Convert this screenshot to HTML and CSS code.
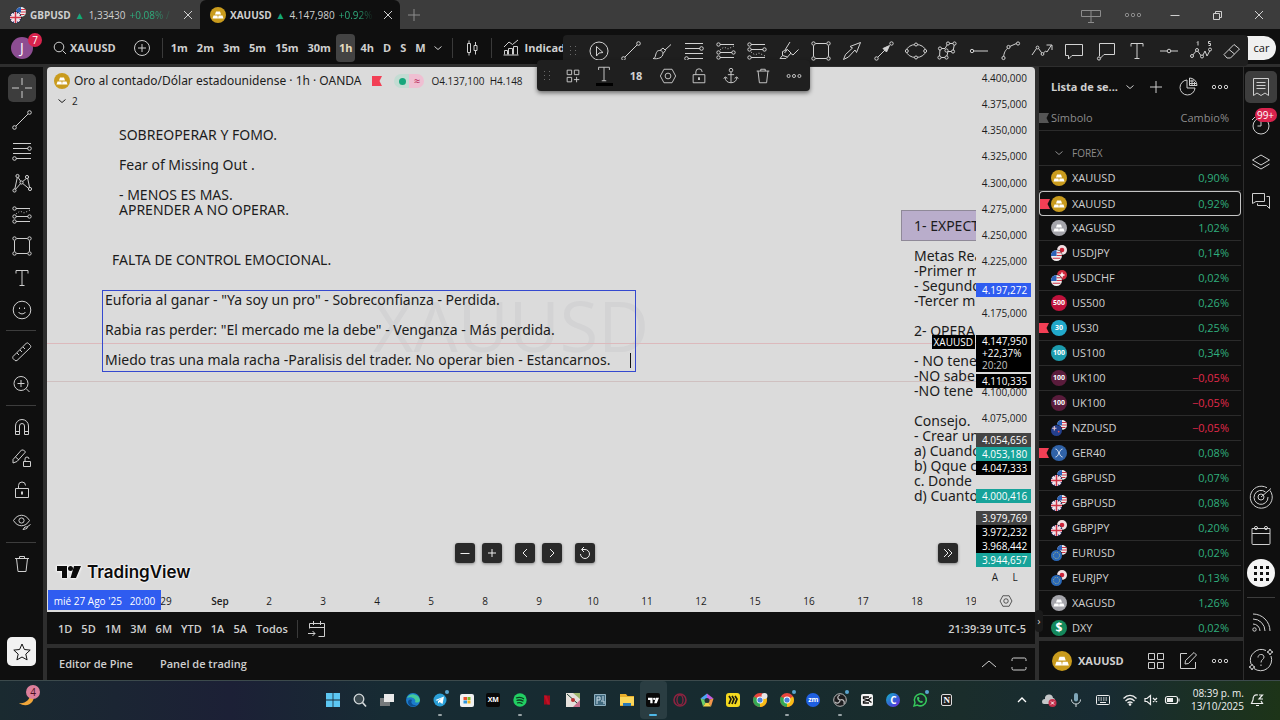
FILE: index.html
```html
<!DOCTYPE html>
<html lang="es">
<head>
    <meta charset="UTF-8">
    <meta name="viewport" content="width=device-width, initial-scale=1.0">
    <title>XAUUSD 4.147,980 +0.92%</title>
    <link rel="stylesheet" href="styles.css">
</head>
<body>
    <!-- icon sprite -->
    <svg class="sprite" aria-hidden="true">
        <symbol id="i-close" viewBox="0 0 20 20"><path d="M6 6l8 8M14 6l-8 8"/></symbol>
        <symbol id="i-plus" viewBox="0 0 20 20"><path d="M10 4v12M4 10h12"/></symbol>
        <symbol id="i-plus-circle" viewBox="0 0 20 20"><circle cx="10" cy="10" r="7.500"/><path d="M10 6v8M6 10h8"/></symbol>
        <symbol id="i-min" viewBox="0 0 20 20"><path d="M5.500 10.500h9"/></symbol>
        <symbol id="i-restore" viewBox="0 0 20 20"><path d="M6.500 8.500h6v6h-6zM8.500 8.500v-2h6v6h-2"/></symbol>
        <symbol id="i-layout" viewBox="0 0 20 20"><path d="M.5 5.500h19v6h-19zM10 5.500v12M7 17.500h6"/></symbol>
        <symbol id="i-dots" viewBox="0 0 20 20"><circle cx="4" cy="10" r="1.700"/><circle cx="10" cy="10" r="1.700"/><circle cx="16" cy="10" r="1.700"/></symbol>
        <symbol id="i-search" viewBox="0 0 20 20"><circle cx="9" cy="9" r="4.800"/><path d="M12.500 12.500l3.500 3.500"/></symbol>
        <symbol id="i-chevron" viewBox="0 0 20 20"><path d="M6.500 8.500l3.500 3 3.500-3"/></symbol>
        <symbol id="i-up" viewBox="0 0 20 20"><path d="M3 13l7-6 7 6"/></symbol>
        <symbol id="i-candles" viewBox="0 0 20 20"><path d="M5.500 5.500h3v9h-3zM7 2.500v3M7 14.500v3M12 7.500h3v5h-3zM13.500 4v3.500M13.500 12.500v4"/></symbol>
        <symbol id="i-indicators" viewBox="0 0 20 20"><path d="M3.500 16.500v-4h3v4M7.500 16.500v-6h4v6M12.500 16.500v-8h4v8M2.500 17h15M3 9l5-5 3.500 2.500L17 2"/></symbol>
        <symbol id="i-grip" viewBox="0 0 20 20"><g stroke="none" fill="currentColor"><path d="M7 5h1v1H7zM12 5h1v1h-1zM7 9h1v1H7zM12 9h1v1h-1zM7 13h1v1H7zM12 13h1v1h-1z"/></g></symbol>
        <symbol id="i-cursor" viewBox="0 0 20 20"><circle cx="10" cy="10" r="9"/><path d="M7.500 5.500l6.500 6-4 .5-2.500 3z"/></symbol>
        <symbol id="i-cross" viewBox="0 0 20 20"><path d="M10 0v7M10 13v7M0 10h7M13 10h7"/></symbol>
        <symbol id="i-trend" viewBox="0 0 20 20"><circle cx="2.500" cy="17.500" r="1.800"/><circle cx="17.500" cy="2.500" r="1.800"/><path d="M4 16L16 4"/></symbol>
        <symbol id="i-brush" viewBox="0 0 20 20"><path d="M1 17.500c3 0 2-4 4-7 2-2 6-1 6 2 0 4-5 6-10 5zM8 9.500l3-2.500 2.500 2.500-2.500 3M13 9l6-5.500"/></symbol>
        <symbol id="i-fib" viewBox="0 0 20 20"><path d="M1 2.500h18M1 7.500h15M1 12.500h18M4 17.500h15"/><circle cx="17.500" cy="7.500" r="1.800"/><circle cx="2.500" cy="17.500" r="1.800"/></symbol>
        <symbol id="i-long" viewBox="0 0 20 20"><path d="M4 3.500h14M4 11.500h12M4 16.500h14"/><circle cx="2.500" cy="3.500" r="1.700"/><circle cx="2.500" cy="11.500" r="1.700"/><circle cx="2.500" cy="16.500" r="1.700"/><circle cx="17.500" cy="11.500" r="1.700"/><path stroke-dasharray="1 2" d="M4 9l4-3 4 2 6-3"/></symbol>
        <symbol id="i-short" viewBox="0 0 20 20"><path d="M4 3.500h14M4 8.500h12M4 16.500h14"/><circle cx="2.500" cy="3.500" r="1.700"/><circle cx="2.500" cy="8.500" r="1.700"/><circle cx="2.500" cy="16.500" r="1.700"/><circle cx="17.500" cy="8.500" r="1.700"/><path stroke-dasharray="1 2" d="M4 11l4 3 4-2 6 3"/></symbol>
        <symbol id="i-marker" viewBox="0 0 20 20"><path d="M1 17.500h6l1.500-1.500M1 17.500l2.500-3M3.500 14.500v-4l5-2 3.500 3.500-3.500 4zM8.500 8.500l-3 3.500M6 9L11 1M12 12.500l2 1.500 5.500-5.500"/></symbol>
        <symbol id="i-rect" viewBox="0 0 20 20"><path d="M4.500 2.500h11M4.500 17.500h11M2.500 4.500v11M17.500 4.500v11"/><circle cx="2.500" cy="2.500" r="1.700"/><circle cx="17.500" cy="2.500" r="1.700"/><circle cx="2.500" cy="17.500" r="1.700"/><circle cx="17.500" cy="17.500" r="1.700"/></symbol>
        <symbol id="i-arrow" viewBox="0 0 20 20"><path d="M1.500 18.500l2-5 7-6.500L8 5.500l10.500-4-4 10-1.500-2.500-6.500 7z"/></symbol>
        <symbol id="i-arrow-line" viewBox="0 0 20 20"><circle cx="2.500" cy="17.500" r="1.700"/><circle cx="17.500" cy="2.500" r="1.700"/><path d="M4 16l8-8"/><path fill="currentColor" d="M15.500 4.500L9 7.500l3.500 3.500z"/></symbol>
        <symbol id="i-ellipse" viewBox="0 0 22 20"><ellipse cx="11" cy="10" rx="9.500" ry="6.500"/><g class="knot"><circle cx="1.800" cy="10" r="1.500"/><circle cx="20.200" cy="10" r="1.500"/><circle cx="11" cy="3.500" r="1.500"/><circle cx="11" cy="16.500" r="1.500"/></g></symbol>
        <symbol id="i-path" viewBox="0 0 20 20"><path d="M3 7.500h5L11 2.500h6.500l-1.500 8h-5l-1.500 6H2.500z"/><g class="knot"><circle cx="3" cy="7.500" r="1.600"/><circle cx="11" cy="2.500" r="1.600"/><circle cx="17.500" cy="2.500" r="1.600"/><circle cx="16" cy="10.500" r="1.600"/><circle cx="9.500" cy="9.500" r="1.600"/><circle cx="9.500" cy="16.500" r="1.600"/><circle cx="2.500" cy="16.500" r="1.600"/></g></symbol>
        <symbol id="i-ray" viewBox="0 0 20 20"><circle cx="3" cy="10" r="1.700"/><path d="M5 10h14"/></symbol>
        <symbol id="i-curve" viewBox="0 0 20 20"><path d="M2.500 16c1-7 3-7 5-10l9-4"/><g class="knot"><circle cx="2.500" cy="17" r="1.600"/><circle cx="7.500" cy="6" r="1.600"/><circle cx="17" cy="2.500" r="1.600"/></g></symbol>
        <symbol id="i-zigzag" viewBox="0 0 22 20"><path d="M1 14l5.500-8 5 7 3-3 1.500 1 4.500-7M15.500 4H21v5"/><g class="knot"><circle cx="6.500" cy="6.500" r="1.400"/><circle cx="11.500" cy="13" r="1.400"/></g></symbol>
        <symbol id="i-comment" viewBox="0 0 20 20"><path d="M1.500 3.500h17v11H8L4.500 18v-3.500h-3z"/></symbol>
        <symbol id="i-callout" viewBox="0 0 20 20"><path d="M3.500 15V2.500h15v11H8l-4 4"/><circle cx="3" cy="17.500" r="1.600"/></symbol>
        <symbol id="i-text" viewBox="0 0 20 20"><path d="M4 5.500v-3h12v3M10 2.500v15M7.500 17.500h5"/></symbol>
        <symbol id="i-hline" viewBox="0 0 20 20"><path d="M1 10h7M12 10h7"/><circle cx="10" cy="10" r="1.800"/></symbol>
        <symbol id="i-elliott" viewBox="0 0 22 20"><path d="M2 15l5-6 5 7 3-6 2 5 3.500-6.500"/><path d="M7 1.500l1-1v4M20.500.5h-2v2h2v2h-2"/><g class="knot"><circle cx="2" cy="15" r="1.500"/><circle cx="7" cy="9" r="1.500"/><circle cx="12" cy="15.500" r="1.500"/><circle cx="20" cy="8.500" r="1.500"/></g></symbol>
        <symbol id="i-eraser" viewBox="0 0 20 20"><path d="M2 13.500L12 3.500l5.500 4.500-9 9H5zM7 8.500l5.500 4.500"/></symbol>
        <symbol id="i-template" viewBox="0 0 20 20"><path d="M3.500 3.500h5v5h-5zM11.500 3.500h5v5h-5zM3.500 11.500h5v5h-5zM14 11v6M11 14h6"/></symbol>
        <symbol id="i-hexagon" viewBox="0 0 20 20"><path d="M5.500 2.500h9l4 7.500-4 7.500h-9L1.500 10z"/><circle cx="10" cy="10" r="3.200"/></symbol>
        <symbol id="i-unlock" viewBox="0 0 20 20"><path d="M3.500 8.500h13v9h-13zM6.500 8.500V5.500a3.500 3.500 0 0 1 7 0"/><path stroke-width="2" d="M10 11.500v3"/></symbol>
        <symbol id="i-anchor" viewBox="0 0 20 20"><circle cx="10" cy="3.500" r="2"/><path d="M10 5.500v12M6.500 8.500h7M3.500 11.500c0 4 3 6 6.500 6s6.500-2 6.500-6M2 13l1.500-2L6 12.500M14 12.500l2.500-1.500L18 13"/></symbol>
        <symbol id="i-trash" viewBox="0 0 20 20"><path d="M3 4.500h14M7.500 4.500v-2h5v2M4.500 4.500l1.500 13h8l1.500-13"/></symbol>
        <symbol id="i-pattern" viewBox="0 0 20 20"><path d="M2.500 17.500l3-14 4 6 6-5 2.500 12-8.500-7z"/><g class="knot"><circle cx="2.500" cy="17.500" r="1.600"/><circle cx="5.500" cy="3" r="1.600"/><circle cx="9.500" cy="9.500" r="1.600"/><circle cx="15" cy="4" r="1.600"/><circle cx="18" cy="16" r="1.600"/></g></symbol>
        <symbol id="i-smile" viewBox="0 0 20 20"><circle cx="10" cy="10" r="8.800"/><path d="M6.500 12c1.500 2.500 5.500 2.500 7 0M7.500 7.500v1.500M12.500 7.500v1.500"/></symbol>
        <symbol id="i-ruler" viewBox="0 0 20 20"><path d="M1 14.500L14.500 1q1-.5 2 .5l2 2q.5 1 0 2L5 18.500q-1 .5-2 0L1 16.500q-.5-1 0-2zM5 11l2 2M8 8l2 2M11 5l2 2"/></symbol>
        <symbol id="i-zoom" viewBox="0 0 20 20"><circle cx="9" cy="9.500" r="7"/><path d="M9 6v7M5.500 9.500h7M14 14.500l3.500 3.500"/></symbol>
        <symbol id="i-magnet" viewBox="0 0 20 20"><path d="M3.500 17.500V9a6.500 6.500 0 0 1 13 0v8.500h-4V9a2.500 2.500 0 0 0-5 0v8.500zM3.500 14.500h4M12.500 14.500h4"/></symbol>
        <symbol id="i-pencil-lock" viewBox="0 0 20 20"><path d="M1 11.500L9.500 2q2-1 4 2L5 13.500l-4 1.500zM3.500 9l3.500 3"/><path d="M11.500 13.500h7v5h-7zM13 13.500V11a2 2 0 0 1 4 0"/></symbol>
        <symbol id="i-eye" viewBox="0 0 20 20"><path d="M1.500 8.500c4-7 12-7 16 0-4 7-12 7-16 0z"/><circle cx="9.500" cy="8.500" r="2.600"/><path d="M11 17.500q2-4 4-2.500t-4 2.500zM15 15l3.500-2.500"/></symbol>
        <symbol id="i-star" viewBox="0 0 20 20"><path d="M10 2l2.400 5.500 5.800.6-4.400 4 1.300 5.800L10 15l-5.100 2.900 1.300-5.800-4.400-4 5.800-.6z"/></symbol>
        <symbol id="i-goto" viewBox="0 0 20 20"><path d="M2.500 9.500v-5h15v13h-6M2.500 8.500h15M6.500 2v4M13.500 2v4M1 14.500h7M5.500 12l2.500 2.500L5.500 17"/></symbol>
        <symbol id="i-max" viewBox="0 0 20 20"><path d="M3 7V5.500q0-1.500 1.500-1.500h11q1.500 0 1.500 1.500V7M3 13v1.500q0 1.500 1.500 1.500h11q1.500 0 1.500-1.500V13"/></symbol>
        <symbol id="i-pie" viewBox="0 0 20 20"><path d="M9 3a7.500 7.500 0 1 0 8 8H9zM11.500 1v7.500H19A7.500 7.500 0 0 0 11.500 1zM14 2.500v6M16.500 5v3M12 4h4M12 6.500h6"/></symbol>
        <symbol id="i-list" viewBox="0 0 20 20"><path d="M2.500 1.500h15v17L14 16l-4 2.500L6 16l-3.500 2.500zM5.500 5.500h9M5.500 8.500h9M5.500 11.500h9"/></symbol>
        <symbol id="i-alarm" viewBox="0 0 20 20"><circle cx="10" cy="11" r="8"/><path d="M10 6v5H6.500M1 5l3-3"/></symbol>
        <symbol id="i-layers" viewBox="0 0 20 20"><path d="M10 2l8.500 5L10 12 1.500 7zM1.500 11l8.500 5 8.500-5"/></symbol>
        <symbol id="i-chat" viewBox="0 0 20 20"><path d="M1.500 12.500v-10h12v8H5zM15.500 5.500h3v12l-3-3h-9v-2"/></symbol>
        <symbol id="i-radar" viewBox="0 0 24 24"><path d="M21 5.500A11 11 0 1 1 18 2.800M16.500 7A7 7 0 1 0 19 12"/><circle cx="12" cy="12" r="3"/><path d="M12 12l10-8.500"/></symbol>
        <symbol id="i-calendar" viewBox="0 0 20 20"><path d="M1 3.500h18v15q0 1-1 1H2q-1 0-1-1zM1 8.500h18"/><circle cx="5" cy="3" r="1.600"/><circle cx="15" cy="3" r="1.600"/></symbol>
        <symbol id="i-apps" viewBox="0 0 20 20"><g stroke="none" fill="currentColor"><path d="M3 3h3v3H3zM9 3h3v3H9zM15 3h3v3h-3zM3 9h3v3H3zM9 9h3v3H9zM15 9h3v3h-3zM3 15h3v3H3zM9 15h3v3H9zM15 15h3v3h-3z"/></g></symbol>
        <symbol id="i-feed" viewBox="0 0 20 20"><path d="M2 2a17 17 0 0 1 17 17M2 7a12 12 0 0 1 12 12M2 12a7 7 0 0 1 7 7"/><circle cx="3.500" cy="17.500" r="1.700"/></symbol>
        <symbol id="i-help" viewBox="0 0 24 24"><path d="M17 2.500A11 11 0 0 0 2 16M5 20.500A11 11 0 0 0 22 8M21 1l1 2 2 1-2 1-1 2-1-2-2-1 2-1zM3 16l1 2 2 1-2 1-1 2-1-2-2-1 2-1zM9 9.500c0-4 6-4 6-.5 0 2.500-3 2.500-3 5.500M12 16.500v1.500"/></symbol>
        <symbol id="i-grid4" viewBox="0 0 20 20"><path d="M2.500 2.500h6v6h-6zM11.500 2.500h6v6h-6zM2.500 11.500h6v6h-6zM11.500 11.500h6v6h-6z"/></symbol>
        <symbol id="i-edit" viewBox="0 0 20 20"><path d="M9 2.500H2.500v15h15V11M7 13l.5-3.500 8.500-8 2.500 2.500-8 8.500z"/></symbol>
        <symbol id="i-reset" viewBox="0 0 20 20"><path d="M5.500 11a4.500 4.500 0 1 0 4.500-4.500H7M9 4L6.500 6.500 9 9"/></symbol>
        <!-- round instrument logos -->
        <symbol id="c-gold" viewBox="0 0 16 16"><circle cx="8" cy="8" r="8" fill="#c99b1d"/><path fill="#fff" d="M6 4.500h4l1 3H5zM3.500 8.500h4l.5 3H2.500zM8.500 8.500h4l1 3H8z"/></symbol>
        <symbol id="c-silver" viewBox="0 0 16 16"><circle cx="8" cy="8" r="8" fill="#a5a5ab"/><path fill="#fff" d="M6 4.500h4l1 3H5zM3.500 8.500h4l.5 3H2.500zM8.500 8.500h4l1 3H8z"/></symbol>
        <symbol id="f-us" viewBox="0 0 10 10"><circle cx="5" cy="5" r="5" fill="#eee"/><path stroke="#cf3347" d="M5 2.500h4.500M5 5h5M1.500 7.500h7"/><path fill="#2b62b8" d="M5 0v5.500H0A5 5 0 0 1 5 0z"/></symbol>
        <symbol id="f-gb" viewBox="0 0 10 10"><circle cx="5" cy="5" r="5" fill="#3c4f9c"/><path stroke="#f1e3e8" stroke-width="2.600" d="M5 0v10M0 5h10M1.500 1.500l7 7M8.500 1.500l-7 7"/><path stroke="#cf3347" stroke-width="1.300" d="M5 0v10M0 5h10"/></symbol>
        <symbol id="f-jp" viewBox="0 0 10 10"><circle cx="5" cy="5" r="5" fill="#f0dfe2"/><circle cx="5" cy="5" r="2.300" fill="#cc2238"/></symbol>
        <symbol id="f-ch" viewBox="0 0 10 10"><circle cx="5" cy="5" r="5" fill="#cf2b3e"/><path stroke="#fff" stroke-width="1.500" d="M5 2.500v5M2.500 5h5"/></symbol>
        <symbol id="f-nz" viewBox="0 0 10 10"><circle cx="5" cy="5" r="5" fill="#243f8c"/><path stroke="#e8c8d0" d="M1 3h4M3 1v4"/><circle cx="7" cy="6" r=".8" fill="#e55"/></symbol>
        <symbol id="f-eu" viewBox="0 0 10 10"><circle cx="5" cy="5" r="5" fill="#2a68b8"/><circle cx="5" cy="5" r="2.800" fill="none" stroke="#b9c07a" stroke-width=".8" stroke-dasharray="1 1.200"/></symbol>
        <symbol id="p-gbpusd" viewBox="0 0 16 16"><use href="#f-us" x="6" y="0" width="10" height="10"/><circle cx="5.500" cy="10.500" r="6" fill="#0f0f0f"/><use href="#f-gb" x="0" y="5" width="11" height="11"/></symbol>
        <symbol id="p-usdjpy" viewBox="0 0 16 16"><use href="#f-jp" x="6" y="0" width="10" height="10"/><circle cx="5.500" cy="10.500" r="6" fill="#0f0f0f"/><use href="#f-us" x="0" y="5" width="11" height="11"/></symbol>
        <symbol id="p-usdchf" viewBox="0 0 16 16"><use href="#f-ch" x="6" y="0" width="10" height="10"/><circle cx="5.500" cy="10.500" r="6" fill="#0f0f0f"/><use href="#f-us" x="0" y="5" width="11" height="11"/></symbol>
        <symbol id="p-nzdusd" viewBox="0 0 16 16"><use href="#f-us" x="6" y="0" width="10" height="10"/><circle cx="5.500" cy="10.500" r="6" fill="#0f0f0f"/><use href="#f-nz" x="0" y="5" width="11" height="11"/></symbol>
        <symbol id="p-gbpjpy" viewBox="0 0 16 16"><use href="#f-jp" x="6" y="0" width="10" height="10"/><circle cx="5.500" cy="10.500" r="6" fill="#0f0f0f"/><use href="#f-gb" x="0" y="5" width="11" height="11"/></symbol>
        <symbol id="p-eurusd" viewBox="0 0 16 16"><use href="#f-us" x="6" y="0" width="10" height="10"/><circle cx="5.500" cy="10.500" r="6" fill="#0f0f0f"/><use href="#f-eu" x="0" y="5" width="11" height="11"/></symbol>
        <symbol id="p-eurjpy" viewBox="0 0 16 16"><use href="#f-jp" x="6" y="0" width="10" height="10"/><circle cx="5.500" cy="10.500" r="6" fill="#0f0f0f"/><use href="#f-eu" x="0" y="5" width="11" height="11"/></symbol>
        <symbol id="c-ger" viewBox="0 0 16 16"><circle cx="8" cy="8" r="8" fill="#2f62a8"/><path fill="none" stroke="#e8eef8" d="M4.500 4c3 0 4 8 7 8M11.500 4c-3 0-4 8-7 8"/></symbol>
        <symbol id="c-tv" viewBox="0 0 24 14"><path fill="currentColor" d="M0 1h10v12H5V6H0zM17 1h7l-5 12h-5.500z"/><circle cx="13.500" cy="3.500" r="2.500" fill="currentColor"/></symbol>
        <symbol id="c-flag" viewBox="0 0 10 10"><path fill="currentColor" d="M0 0h10L7.500 5l2.500 5H0z"/></symbol>
        <symbol id="c-chrome" viewBox="0 0 16 16"><circle cx="8" cy="8" r="7" fill="#e8453c"/><path fill="#f6bd17" d="M8 8l6-3.500A7 7 0 0 1 8 15z"/><path fill="#35a853" d="M8 8v7A7 7 0 0 1 2 4.500z"/><circle cx="8" cy="8" r="3.400" fill="#fff"/><circle cx="8" cy="8" r="2.600" fill="#4a80dc"/></symbol>
    </svg>

    <header class="titlebar">
        <div class="tab">
            <svg class="coin"><use href="#p-gbpusd"/></svg>
            <b>GBPUSD</b><span class="tri">▲</span><span>1,33430</span><span class="up fade">+0.08% /</span>
            <button class="tab-close" aria-label="Cerrar"><svg class="icon"><use href="#i-close"/></svg></button>
        </div>
        <div class="tab active">
            <svg class="coin"><use href="#c-gold"/></svg>
            <b>XAUUSD</b><span class="tri">▲</span><span>4.147,980</span><span class="up fade">+0.92%</span>
            <button class="tab-close" aria-label="Cerrar"><svg class="icon"><use href="#i-close"/></svg></button>
        </div>
        <button class="new-tab dim" aria-label="Nueva pestaña"><svg class="icon"><use href="#i-plus"/></svg></button>
        <div class="window-buttons">
            <button class="dim" aria-label="Ventanas"><svg class="icon"><use href="#i-layout"/></svg></button>
            <button class="dim" aria-label="Menú"><svg class="icon"><use href="#i-dots"/></svg></button>
            <button aria-label="Minimizar"><svg class="icon"><use href="#i-min"/></svg></button>
            <button aria-label="Restaurar"><svg class="icon"><use href="#i-restore"/></svg></button>
            <button aria-label="Cerrar ventana"><svg class="icon"><use href="#i-close"/></svg></button>
        </div>
    </header>

    <nav class="topbar">
        <button class="avatar">J<span class="badge">7</span></button>
        <button class="symbol-search"><svg class="icon"><use href="#i-search"/></svg>XAUUSD</button>
        <button class="compare" aria-label="Comparar"><svg class="icon"><use href="#i-plus-circle"/></svg></button>
        <div class="intervals">
            <button>1m</button>
            <button>2m</button>
            <button>3m</button>
            <button>5m</button>
            <button>15m</button>
            <button>30m</button>
            <button class="on">1h</button>
            <button>4h</button>
            <button>D</button>
            <button>S</button>
            <button>M</button>
            <button class="more" aria-label="Más intervalos"><svg class="icon"><use href="#i-chevron"/></svg></button>
        </div>
        <button class="candles" aria-label="Velas"><svg class="icon"><use href="#i-candles"/></svg></button>
        <button class="indicators"><svg class="icon"><use href="#i-indicators"/></svg>Indicad</button>
        <button class="publish">car</button>

        <div class="favorites">
            <svg class="icon grip"><use href="#i-grip"/></svg>
            <button aria-label="Demostración"><svg class="icon"><use href="#i-cursor"/></svg></button>
            <button aria-label="Línea de tendencia"><svg class="icon"><use href="#i-trend"/></svg></button>
            <button aria-label="Pincel"><svg class="icon"><use href="#i-brush"/></svg></button>
            <button aria-label="Retroceso de Fibonacci"><svg class="icon"><use href="#i-fib"/></svg></button>
            <button aria-label="Posición larga"><svg class="icon"><use href="#i-long"/></svg></button>
            <button aria-label="Posición corta"><svg class="icon"><use href="#i-short"/></svg></button>
            <button aria-label="Marcador"><svg class="icon"><use href="#i-marker"/></svg></button>
            <button aria-label="Rectángulo"><svg class="icon"><use href="#i-rect"/></svg></button>
            <button aria-label="Marcador de flecha"><svg class="icon"><use href="#i-arrow"/></svg></button>
            <button aria-label="Flecha"><svg class="icon"><use href="#i-arrow-line"/></svg></button>
            <button aria-label="Elipse"><svg class="icon wide"><use href="#i-ellipse"/></svg></button>
            <button aria-label="Trazado"><svg class="icon"><use href="#i-path"/></svg></button>
            <button aria-label="Rayo horizontal"><svg class="icon"><use href="#i-ray"/></svg></button>
            <button aria-label="Curva"><svg class="icon"><use href="#i-curve"/></svg></button>
            <button aria-label="Polilínea"><svg class="icon wide"><use href="#i-zigzag"/></svg></button>
            <button aria-label="Comentario"><svg class="icon"><use href="#i-comment"/></svg></button>
            <button aria-label="Globo"><svg class="icon"><use href="#i-callout"/></svg></button>
            <button aria-label="Texto"><svg class="icon"><use href="#i-text"/></svg></button>
            <button aria-label="Línea horizontal"><svg class="icon"><use href="#i-hline"/></svg></button>
            <button aria-label="Onda de Elliott"><svg class="icon wide"><use href="#i-elliott"/></svg></button>
            <button aria-label="Borrador"><svg class="icon"><use href="#i-eraser"/></svg></button>
        </div>
        <div class="properties">
            <svg class="icon grip"><use href="#i-grip"/></svg>
            <button aria-label="Plantillas"><svg class="icon"><use href="#i-template"/></svg></button>
            <button class="text-color" aria-label="Color del texto"><svg class="icon"><use href="#i-text"/></svg></button>
            <button class="font-size">18</button>
            <button aria-label="Configuración"><svg class="icon"><use href="#i-hexagon"/></svg></button>
            <button aria-label="Bloquear"><svg class="icon"><use href="#i-unlock"/></svg></button>
            <button aria-label="Anclar"><svg class="icon"><use href="#i-anchor"/></svg></button>
            <button aria-label="Eliminar"><svg class="icon"><use href="#i-trash"/></svg></button>
            <button aria-label="Más"><svg class="icon"><use href="#i-dots"/></svg></button>
        </div>
    </nav>

    <main class="workspace">
        <aside class="drawing-bar">
            <div class="tools">
                <button class="on" aria-label="Cruz"><svg class="icon"><use href="#i-cross"/></svg></button>
                <button aria-label="Línea de tendencia"><svg class="icon"><use href="#i-trend"/></svg></button>
                <button aria-label="Fibonacci"><svg class="icon"><use href="#i-fib"/></svg></button>
                <button aria-label="Patrones"><svg class="icon"><use href="#i-pattern"/></svg></button>
                <button aria-label="Previsión"><svg class="icon"><use href="#i-long"/></svg></button>
                <button aria-label="Formas"><svg class="icon"><use href="#i-rect"/></svg></button>
                <button aria-label="Texto"><svg class="icon"><use href="#i-text"/></svg></button>
                <button aria-label="Iconos"><svg class="icon"><use href="#i-smile"/></svg></button>
                <hr>
                <button aria-label="Medir"><svg class="icon"><use href="#i-ruler"/></svg></button>
                <button aria-label="Acercar"><svg class="icon"><use href="#i-zoom"/></svg></button>
                <hr>
                <button aria-label="Imán"><svg class="icon"><use href="#i-magnet"/></svg></button>
                <button aria-label="Modo de dibujo"><svg class="icon"><use href="#i-pencil-lock"/></svg></button>
                <button aria-label="Bloquear dibujos"><svg class="icon"><use href="#i-unlock"/></svg></button>
                <button aria-label="Ocultar dibujos"><svg class="icon"><use href="#i-eye"/></svg></button>
                <hr>
                <button aria-label="Eliminar dibujos"><svg class="icon"><use href="#i-trash"/></svg></button>
            </div>
            <button class="star" aria-label="Favoritos"><svg class="icon"><use href="#i-star"/></svg></button>
        </aside>

        <section class="center">
            <div class="chart">
                <div class="pane">
                    <div class="watermark">XAUUSD</div>
                    <div class="level level-a"></div>
                    <div class="level level-b"></div>

                    <div class="legend">
                        <svg class="coin"><use href="#c-gold"/></svg>
                        <span class="legend-title">Oro al contado/Dólar estadounidense · 1h · OANDA</span>
                        <svg class="flag"><use href="#c-flag"/></svg>
                        <span class="status"><i class="dot"></i><i class="approx">≈</i></span>
                        <span class="ohlc">O4.137,100 &nbsp;H4.148</span>
                    </div>
                    <button class="legend-toggle"><svg class="icon"><use href="#i-chevron"/></svg>2</button>

                    <p class="note note-fomo">SOBREOPERAR Y FOMO.

Fear of Missing Out .

- MENOS ES MAS.
APRENDER A NO OPERAR.</p>
                    <p class="note note-control">FALTA DE CONTROL EMOCIONAL.</p>
                    <textarea class="note note-edit" aria-label="Texto" spellcheck="false">Euforia al ganar - "Ya soy un pro" - Sobreconfianza - Perdida.

Rabia ras perder: "El mercado me la debe" - Venganza - Más perdida.

Miedo tras una mala racha -Paralisis del trader. No operar bien - Estancarnos. </textarea>
                    <span class="caret"></span>
                    <p class="note note-title">1- EXPECT</p>
                    <p class="note note-goals">Metas Rea
-Primer m
- Segundo
-Tercer m

2- OPERA

- NO tene
-NO sabe
-NO tene

Consejo.
- Crear un
a) Cuando
b) Qque c
c. Donde
d) Cuanto</p>
                    <span class="price-tag">XAUUSD</span>

                    <div class="nav-buttons">
                        <button aria-label="Alejar"><svg class="icon"><use href="#i-min"/></svg></button>
                        <button aria-label="Acercar"><svg class="icon"><path d="M10 6v8M6 10h8"/></svg></button>
                        <button class="gap" aria-label="Izquierda"><svg class="icon"><path d="M12 6l-4 4 4 4"/></svg></button>
                        <button aria-label="Derecha"><svg class="icon"><path d="M8 6l4 4-4 4"/></svg></button>
                        <button class="gap" aria-label="Restablecer"><svg class="icon"><use href="#i-reset"/></svg></button>
                    </div>
                    <button class="latest" aria-label="Última barra"><svg class="icon"><path d="M6 6l4 4-4 4M10 6l4 4-4 4"/></svg></button>

                    <a class="brand" href="#"><svg class="brand-mark"><use href="#c-tv"/></svg>TradingView</a>
                </div>

                <div class="scale">
                    <ul class="ticks">
                        <li>4.400,000</li>
                        <li>4.375,000</li>
                        <li>4.350,000</li>
                        <li>4.325,000</li>
                        <li>4.300,000</li>
                        <li>4.275,000</li>
                        <li>4.250,000</li>
                        <li>4.225,000</li>
                        <li></li>
                        <li>4.175,000</li>
                        <li></li>
                        <li></li>
                        <li>4.100,000</li>
                        <li>4.075,000</li>
                    </ul>
                    <span class="label blue l-cross">4.197,272</span>
                    <span class="label l-last">4.147,950<br>+22,37%<br><small>20:20</small></span>
                    <span class="label l-4110">4.110,335</span>
                    <div class="label-stack l-4054">
                        <span class="label gray">4.054,656</span>
                        <span class="label teal">4.053,180</span>
                        <span class="label">4.047,333</span>
                    </div>
                    <span class="label teal l-4000">4.000,416</span>
                    <div class="label-stack l-3979">
                        <span class="label gray">3.979,769</span>
                        <span class="label">3.972,232</span>
                        <span class="label">3.968,442</span>
                        <span class="label teal">3.944,657</span>
                    </div>
                    <div class="scale-modes"><button>A</button><button>L</button></div>
                </div>

                <div class="time-axis">
                    <span class="wide">29</span><b>Sep</b><span>2</span><span>3</span><span>4</span><span>5</span><span>8</span><span>9</span><span>10</span><span>11</span><span>12</span><span>15</span><span>16</span><span>17</span><span>18</span><span>19</span>
                    <div class="cross-time">mié 27 Ago '25 &nbsp; 20:00</div>
                </div>
                <button class="axis-settings" aria-label="Ajustes del eje"><svg class="icon"><use href="#i-hexagon"/></svg></button>
            </div>

            <div class="ranges">
                <button>1D</button>
                <button>5D</button>
                <button>1M</button>
                <button>3M</button>
                <button>6M</button>
                <button>YTD</button>
                <button>1A</button>
                <button>5A</button>
                <button>Todos</button>
                <button class="goto" aria-label="Ir a"><svg class="icon"><use href="#i-goto"/></svg></button>
                <button class="clock">21:39:39 UTC-5</button>
            </div>
            <div class="panels">
                <button>Editor de Pine</button>
                <button>Panel de trading</button>
                <span class="panel-actions">
                    <button aria-label="Abrir panel"><svg class="icon"><use href="#i-up"/></svg></button>
                    <button aria-label="Maximizar panel"><svg class="icon"><use href="#i-max"/></svg></button>
                </span>
            </div>
        </section>

        <aside class="watchlist">
            <div class="watch-head">
                <button class="list-name">Lista de se...<svg class="icon"><use href="#i-chevron"/></svg></button>
                <button aria-label="Añadir símbolo"><svg class="icon"><use href="#i-plus"/></svg></button>
                <button aria-label="Ajustes"><svg class="icon"><use href="#i-pie"/></svg></button>
                <button aria-label="Más"><svg class="icon"><use href="#i-dots"/></svg></button>
            </div>
            <div class="watch-scroll">
                <table>
                    <colgroup><col class="col-flag"><col class="col-logo"><col><col class="col-pct"></colgroup>
                    <thead>
                        <tr><th class="mute"><svg class="flag"><use href="#c-flag"/></svg></th><th colspan="2">Símbolo</th><th class="pct">Cambio%</th></tr>
                    </thead>
                    <tbody>
                        <tr class="group"><td></td><td><svg class="icon"><use href="#i-chevron"/></svg></td><td colspan="2">FOREX</td></tr>
                        <tr><td></td><td><svg class="coin"><use href="#c-gold"/></svg></td><td>XAUUSD</td><td class="pct up">0,90%</td></tr>
                        <tr class="selected"><td><svg class="flag"><use href="#c-flag"/></svg></td><td><svg class="coin"><use href="#c-gold"/></svg></td><td>XAUUSD</td><td class="pct up">0,92%</td></tr>
                        <tr><td></td><td><svg class="coin"><use href="#c-silver"/></svg></td><td>XAGUSD</td><td class="pct up">1,02%</td></tr>
                        <tr><td></td><td><svg class="coin"><use href="#p-usdjpy"/></svg></td><td>USDJPY</td><td class="pct up">0,14%</td></tr>
                        <tr><td></td><td><svg class="coin"><use href="#p-usdchf"/></svg></td><td>USDCHF</td><td class="pct up">0,02%</td></tr>
                        <tr><td></td><td><i class="coin us500">500</i></td><td>US500</td><td class="pct up">0,26%</td></tr>
                        <tr><td><svg class="flag"><use href="#c-flag"/></svg></td><td><i class="coin us30">30</i></td><td>US30</td><td class="pct up">0,25%</td></tr>
                        <tr><td></td><td><i class="coin us100">100</i></td><td>US100</td><td class="pct up">0,34%</td></tr>
                        <tr><td></td><td><i class="coin uk100">100</i></td><td>UK100</td><td class="pct down">−0,05%</td></tr>
                        <tr><td></td><td><i class="coin uk100">100</i></td><td>UK100</td><td class="pct down">−0,05%</td></tr>
                        <tr><td></td><td><svg class="coin"><use href="#p-nzdusd"/></svg></td><td>NZDUSD</td><td class="pct down">−0,05%</td></tr>
                        <tr><td><svg class="flag"><use href="#c-flag"/></svg></td><td><svg class="coin"><use href="#c-ger"/></svg></td><td>GER40</td><td class="pct up">0,08%</td></tr>
                        <tr><td></td><td><svg class="coin"><use href="#p-gbpusd"/></svg></td><td>GBPUSD</td><td class="pct up">0,07%</td></tr>
                        <tr><td></td><td><svg class="coin"><use href="#p-gbpusd"/></svg></td><td>GBPUSD</td><td class="pct up">0,08%</td></tr>
                        <tr><td></td><td><svg class="coin"><use href="#p-gbpjpy"/></svg></td><td>GBPJPY</td><td class="pct up">0,20%</td></tr>
                        <tr><td></td><td><svg class="coin"><use href="#p-eurusd"/></svg></td><td>EURUSD</td><td class="pct up">0,02%</td></tr>
                        <tr><td></td><td><svg class="coin"><use href="#p-eurjpy"/></svg></td><td>EURJPY</td><td class="pct up">0,13%</td></tr>
                        <tr><td></td><td><svg class="coin"><use href="#c-silver"/></svg></td><td>XAGUSD</td><td class="pct up">1,26%</td></tr>
                        <tr><td></td><td><i class="coin dxy">$</i></td><td>DXY</td><td class="pct up">0,02%</td></tr>
                    </tbody>
                </table>
            </div>
            <div class="watch-foot">
                <svg class="coin big"><use href="#c-gold"/></svg>
                <b>XAUUSD</b>
                <button aria-label="Vista"><svg class="icon"><use href="#i-grid4"/></svg></button>
                <button aria-label="Nota"><svg class="icon"><use href="#i-edit"/></svg></button>
                <button aria-label="Más"><svg class="icon"><use href="#i-dots"/></svg></button>
            </div>
            <button class="collapse" aria-label="Contraer">›</button>
        </aside>

        <aside class="rail">
            <button class="on" aria-label="Lista"><svg class="icon"><use href="#i-list"/></svg></button>
            <button aria-label="Alertas"><svg class="icon"><use href="#i-alarm"/></svg><span class="badge">99+</span></button>
            <button aria-label="Árbol de objetos"><svg class="icon"><use href="#i-layers"/></svg></button>
            <button aria-label="Chats"><svg class="icon"><use href="#i-chat"/></svg></button>
            <button class="push" aria-label="Analizadores"><svg class="icon large"><use href="#i-radar"/></svg></button>
            <button aria-label="Calendario"><svg class="icon"><use href="#i-calendar"/></svg></button>
            <button class="apps" aria-label="Productos"><svg class="icon"><use href="#i-apps"/></svg></button>
            <hr>
            <button aria-label="Noticias"><svg class="icon"><use href="#i-feed"/></svg></button>
            <button aria-label="Ayuda"><svg class="icon large"><use href="#i-help"/></svg></button>
        </aside>
    </main>

    <footer class="taskbar">
        <button class="weather" aria-label="Tiempo">
            <svg viewBox="0 0 24 24"><path fill="#f0a63a" d="M17 7c4 10-6 17-14 11 6 1 11-3 12-10z"/></svg>
            <span class="badge">4</span>
        </button>
        <div class="apps-row">
            <button aria-label="Inicio"><svg viewBox="0 0 16 16"><path fill="#5cc6f2" d="M1 1h6.600v6.600H1zM8.400 1H15v6.600H8.400zM1 8.400h6.600V15H1zM8.400 8.400H15V15H8.400z"/></svg></button>
            <button aria-label="Buscar"><svg viewBox="0 0 16 16"><circle cx="7" cy="7" r="4.800" fill="#3d4b51" stroke="#d5dadc" stroke-width="1.300"/><path stroke="#d5dadc" stroke-width="1.600" d="M10.500 10.500L14 14.500"/></svg></button>
            <button aria-label="Vista de tareas"><svg viewBox="0 0 16 16"><path fill="#75797b" d="M1 6h10v8H1z"/><path fill="#e9e9e9" d="M5 2h10v8H5z"/></svg></button>
            <button aria-label="Edge"><svg viewBox="0 0 16 16"><circle cx="8" cy="8" r="7" fill="#1c7ccc"/><path fill="#43c99a" d="M2 6a7 7 0 0 1 13 2c0 3-4 3-5 2 2-3-4-6-8-4z"/><path fill="#0e4f92" d="M7 8c-2 3 1 6 5 5-4 3-9 1-9-3 0-2 2-3 4-2z"/></svg></button>
            <button class="running notify" aria-label="Telegram"><svg viewBox="0 0 16 16"><circle cx="8" cy="8" r="6.500" fill="#2ba0d8"/><path fill="#fff" d="M3.500 8l8.500-3.500-1.500 7.500-3-2-1.500 1.500V9l4-3-5 2.800z"/></svg></button>
            <button aria-label="Store"><svg viewBox="0 0 16 16"><rect x="1" y="2" width="14" height="13" rx="2" fill="#f1f1f1"/><path fill="#e8502d" d="M4.500 5H8v3H4.500z"/><path fill="#7db928" d="M8.500 5h3v3h-3z"/><path fill="#2d95dc" d="M4.500 8.500H8v3H4.500z"/><path fill="#f4b61b" d="M8.500 8.500h3v3h-3z"/></svg></button>
            <button aria-label="XM"><i class="tile black">XM</i></button>
            <button class="running" aria-label="Spotify"><svg viewBox="0 0 16 16"><circle cx="8" cy="8" r="6.700" fill="#22cf63"/><path fill="none" stroke="#0d3d20" stroke-width="1.300" d="M4 6c3-1 6-.5 8 1M4.500 8.500c2-.8 5-.4 7 .8M5 11c2-.6 4-.2 5.500.7"/></svg></button>
            <button aria-label="Netflix"><svg viewBox="0 0 16 16"><path fill="#a50b1c" d="M5 3.500h6v9H5z"/><path fill="#c01026" d="M5 3.500h2.500l3.500 9H8.500z"/></svg></button>
            <button aria-label="Paint"><svg viewBox="0 0 16 16"><path fill="#e6e1dc" d="M1 1h14v14H1z"/><path fill="#9db56c" d="M8 1h7v6z"/><path fill="#c86f8c" d="M15 8v7H8z"/><path stroke="#243" d="M2 2l10 9"/><circle cx="8" cy="8" r="2" fill="#b33"/></svg></button>
            <button aria-label="Control"><svg viewBox="0 0 16 16"><path fill="#40697e" stroke="#8fb0c0" d="M2.500 2.500h11v11h-11z"/><path fill="none" stroke="#c7dbe5" d="M5 12V5h3v3H5M9 9h3v3M11 4v4"/></svg></button>
            <button aria-label="Explorador"><svg viewBox="0 0 16 16"><path fill="#e9ae2b" d="M1 2h6l1.500 2H15v10H1z"/><path fill="#fbd75b" d="M1 5h14v8H1z"/><path fill="#2878b8" d="M4 11h8v3H4z"/></svg></button>
            <button class="current" aria-label="TradingView"><i class="tile black"><svg class="mini-tv"><use href="#c-tv"/></svg></i></button>
            <button aria-label="Opera"><svg viewBox="0 0 16 16"><circle cx="8" cy="8" r="6" fill="none" stroke="#8c2340" stroke-width="1.600"/><ellipse cx="8" cy="8" rx="3" ry="5" fill="none" stroke="#8c2340" stroke-width="1.300"/></svg></button>
            <button aria-label="Fotos"><svg viewBox="0 0 16 16"><path fill="#4fa3f2" d="M1.500 6.500l6.500-5v7z"/><path fill="#c25be0" d="M8 1.500l6.500 5-6.500 2z"/><path fill="#f2964b" d="M14.500 6.500L12 14.500l-4-6z"/><path fill="#f4d14a" d="M12 14.500H4l4-6z"/><path fill="#6bcf6b" d="M4 14.500L1.500 6.500l6.500 2z"/><circle cx="8" cy="8.500" r="2.500" fill="#203033"/></svg></button>
            <button aria-label="Miro"><svg viewBox="0 0 16 16"><rect x="1" y="1" width="14" height="14" rx="3" fill="#f4d91f"/><path fill="none" stroke="#1b1a10" stroke-width="1.700" d="M4 4l2 3-2 5M7 4l2 3-2 5M10 4l2 3-2 5"/></svg></button>
            <button aria-label="Chrome Trabajo"><svg><use href="#c-chrome"/><circle cx="12.500" cy="4" r="3" fill="#e6e6e6"/></svg></button>
            <button class="running notify" aria-label="Chrome"><svg><use href="#c-chrome"/></svg></button>
            <button aria-label="Zoom"><i class="tile round zoom">zm</i></button>
            <button class="running notify" aria-label="OBS"><svg viewBox="0 0 16 16"><circle cx="8" cy="8" r="6.300" fill="#1d1d1f" stroke="#b9b9b9"/><path fill="none" stroke="#b9b9b9" stroke-width="1.300" d="M8 8c-3-1-3-4 0-5M8 8c3-1 5 1 4 4M8 8c0 3-3 4-5 2"/></svg></button>
            <button aria-label="CapCut"><svg viewBox="0 0 16 16"><rect x="2" y="2" width="12" height="12" rx="2" fill="#f4f4f4"/><path fill="none" stroke="#111" stroke-width="1.300" d="M12.500 5.500L9 8l3.500 2.500M10 5H4.500v1.500L9 8 4.500 9.500V11H10"/></svg></button>
            <button aria-label="Canva"><i class="tile round canva">C</i></button>
            <button class="notify" aria-label="WhatsApp"><svg viewBox="0 0 16 16"><path fill="none" stroke="#35c65b" stroke-width="1.500" d="M2 14l1-3.500a6 6 0 1 1 2.500 2.600z"/><path fill="#35c65b" d="M5.500 5l1.500 0 .5 1.800-.7.700 2 1.800.8-.6 1.400.8c0 1.500-2 2-4 .5S4.500 6 5.500 5z"/></svg></button>
            <button aria-label="Notion"><i class="tile notion">N</i></button>
        </div>
        <div class="tray">
            <svg viewBox="0 0 16 16"><path fill="none" stroke="#fff" stroke-width="1.300" d="M4 10l4-4 4 4"/></svg>
            <svg viewBox="0 0 16 16"><path fill="#c4c6c8" d="M1 10a3 3 0 0 1 3-3 4 4 0 0 1 8-1c3 0 3 6 0 6H3a2 2 0 0 1-2-2z"/><circle cx="11.500" cy="11" r="4" fill="#c4304c"/><path stroke="#fff" d="M10 9.500l3 3M13 9.500l-3 3"/></svg>
            <svg viewBox="0 0 16 16"><rect x="6" y="1" width="4" height="8.500" rx="2" fill="#7fa6b8"/><path fill="none" stroke="#d5dde0" d="M3.500 7.500c0 6 9 6 9 0M8 12v3"/></svg>
            <svg viewBox="0 0 16 16"><rect x="1.500" y="3.500" width="13" height="9" rx="1" fill="none" stroke="#eee"/><path stroke="#eee" stroke-dasharray="1.500 1" d="M3 6h10M3 8h10"/><path stroke="#eee" d="M5 10.500h6"/></svg>
            <svg viewBox="0 0 16 16"><path fill="none" stroke="#eee" stroke-width="1.300" d="M1.500 6.500c4-4 9-4 13 0M3.500 9c3-3 6-3 9 0M5.500 11c2-1.600 3-1.600 5 0"/><circle cx="8" cy="12.500" r="1.300" fill="#eee"/></svg>
            <svg class="tight" viewBox="0 0 16 16"><path fill="none" stroke="#eee" stroke-width="1.200" d="M2 6.500h2l3.500-3v9L4 9.500H2zM10 6l4 4M14 6l-4 4"/></svg>
            <svg class="tight" viewBox="0 0 16 16"><rect x="1.500" y="4.500" width="12" height="7" rx="2" fill="none" stroke="#eee" stroke-width="1.200"/><path fill="#eee" d="M3 6h6v4H3zM14.500 6.500h1v3h-1z"/></svg>
            <time>08:39 p. m.<br>13/10/2025</time>
            <svg class="tight" viewBox="0 0 16 16"><path fill="none" stroke="#eee" stroke-width="1.200" d="M9 3C5 2 4 5 4 8l-1.500 3.500h11L12 9M7 13.500h3M10 3h3.500L10 7h4"/></svg>
        </div>
    </footer>
</body>
</html>
```
FILE: styles.css
```css
:root {
    --ink: #0f0f0f;
    --gutter: #2e2e2e;
    --paper: #dbdbdb;
    --text: #cfcfcf;
    --green: #2fae7d;
    --red: #e0294a;
    --teal: #17a39a;
    --blue: #2f5cf0;
}

* {
    box-sizing: border-box;
}

body {
    margin: 0;
    height: 100vh;
    display: flex;
    flex-direction: column;
    overflow: hidden;
    background: var(--gutter);
    color: var(--text);
    font-family: "Open Sans", "Noto Sans", sans-serif;
    font-size: 11px;
    line-height: 16px;
}

button {
    display: flex;
    align-items: center;
    justify-content: center;
    padding: 0;
    border: 0;
    background: none;
    color: inherit;
    font: inherit;
    cursor: pointer;
}

p, ul, hr {
    margin: 0;
    padding: 0;
}

i {
    font-style: normal;
}

.sprite {
    display: none;
}

.icon {
    flex: none;
    width: 20px;
    height: 20px;
    fill: none;
    stroke: currentColor;
}

.icon.wide {
    width: 22px;
}

.icon.large {
    width: 24px;
    height: 24px;
}

.knot {
    fill: #1f1f1f;
}

.coin {
    flex: none;
    display: block;
    width: 16px;
    height: 16px;
}

.coin.big {
    width: 20px;
    height: 20px;
}

.up {
    color: var(--green);
}

.down {
    color: var(--red);
}

.dim {
    color: #8c8c8c;
}

.badge {
    position: absolute;
    border-radius: 8px;
    background: #d8234d;
    color: #fff;
    font-size: 10px;
    line-height: 14px;
    text-align: center;
}

/* window tabs */
.titlebar {
    flex: none;
    display: flex;
    height: 29px;
    background: #3c3c3c;
}

.tab {
    display: flex;
    align-items: center;
    gap: 4px;
    width: 200px;
    padding: 0 2px 0 10px;
    white-space: nowrap;
    font-size: 10px;
}

.tab.active {
    background: var(--ink);
    border-radius: 6px 6px 0 0;
}

.tri {
    color: #14a878;
}

.fade {
    flex: 1;
    overflow: hidden;
    mask-image: linear-gradient(to right, #000 50%, transparent);
}

.new-tab {
    width: 28px;
}

.window-buttons {
    display: flex;
    margin-left: auto;
}

.window-buttons button {
    width: 42px;
}

/* top toolbar */
.topbar {
    position: relative;
    z-index: 2;
    flex: none;
    display: flex;
    align-items: center;
    height: 38px;
    padding: 2px 4px 0 11px;
    border-bottom: 3px solid var(--gutter);
    background: var(--ink);
    font-weight: bold;
}

.avatar {
    position: relative;
    width: 22px;
    height: 22px;
    border-radius: 50%;
    background: #8d4d92;
    color: #fff;
    font-size: 14px;
    font-weight: normal;
}

.avatar .badge {
    top: -4px;
    right: -9px;
    width: 14px;
}

.symbol-search {
    margin-left: 17px;
}

.compare {
    margin-left: 16px;
}

.intervals {
    display: flex;
    align-items: center;
    gap: 1px;
    height: 20px;
    margin-left: 10px;
    padding-left: 4px;
    border-left: 1px solid #3a3a3a;
}

.intervals button {
    height: 28px;
    padding: 0 4px;
    border-radius: 4px;
}

.intervals .on {
    padding: 0 3px;
    background: #434343;
    color: #e6dcc0;
}

.intervals .more {
    margin-left: -3px;
    padding: 0;
}

.candles {
    height: 20px;
    padding: 0 9px;
    margin-left: 4px;
    border: solid #3a3a3a;
    border-width: 0 1px;
}

.indicators {
    gap: 4px;
    margin-left: 9px;
}

.publish {
    width: 29px;
    height: 24px;
    margin-left: auto;
    border-radius: 0 12px 12px 0;
    background: #f0f0f0;
    color: #111;
    font-weight: normal;
}

.favorites,
.properties {
    position: absolute;
    display: flex;
    align-items: center;
    height: 31px;
    background: #1f1f1f;
    color: #d2d2d2;
    border-radius: 4px;
}

.favorites {
    top: 6px;
    left: 563px;
    right: 32px;
}

.properties {
    top: 31px;
    left: 537px;
    width: 273px;
    box-shadow: 0 2px 4px rgba(0, 0, 0, 0.5);
}

.favorites button,
.properties button {
    flex: 1;
}

.properties .icon {
    width: 18px;
    height: 18px;
}

.favorites .grip,
.properties .grip {
    width: 20px;
    height: 20px;
    color: #6a6a6a;
}

.text-color {
    flex-direction: column;
}

.text-color::after {
    content: "";
    width: 17px;
    height: 3px;
    background: #000;
}

/* workspace */
.workspace {
    flex: 1;
    min-height: 0;
    display: flex;
}

.drawing-bar {
    flex: none;
    display: flex;
    flex-direction: column;
    width: 43px;
    padding: 5px 0 14px;
    background: var(--ink);
}

.drawing-bar .knot {
    fill: var(--ink);
}

.tools {
    flex: 1;
    display: flex;
    flex-direction: column;
    margin-bottom: 57px;
}

.tools button {
    flex: 1;
}

.tools .on .icon {
    width: 28px;
    height: 28px;
    padding: 4px;
    border-radius: 5px;
    background: #3d3d3d;
}

.tools hr {
    flex: none;
    width: 30px;
    height: 1px;
    margin: 5px 6px;
    border: 0;
    background: #3d3d3d;
}

.star {
    width: 29px;
    height: 29px;
    margin: 0 7px;
    border-radius: 5px;
    background: #f2f2f2;
    color: #111;
}

.center {
    flex: 1;
    min-width: 0;
    display: flex;
    flex-direction: column;
    margin: 0 4px;
}

.chart {
    flex: 1;
    min-height: 0;
    display: grid;
    grid-template: 1fr 22px / 1fr 59px;
    border-radius: 4px 4px 0 0;
    background: var(--paper);
    color: #1c1c1c;
}

.pane,
.scale {
    position: relative;
    overflow: hidden;
}

.watermark {
    position: absolute;
    top: 222px;
    left: 326px;
    color: #d3d3d4;
    font-size: 70px;
    line-height: 72px;
}

.level {
    position: absolute;
    left: 0;
    right: 0;
    height: 1px;
    background: #dcb9bc;
}

.level-a {
    top: 276px;
}

.level-b {
    top: 314px;
    background: #cfc0c0;
}

.legend {
    display: flex;
    align-items: center;
    height: 28px;
    padding-left: 7px;
    white-space: nowrap;
}

.legend-title {
    margin-left: 4px;
    font-family: "Noto Sans", sans-serif;
    font-size: 12px;
}

.flag {
    display: block;
    width: 10px;
    height: 10px;
    color: #f23f55;
}

.legend .flag {
    margin-left: 11px;
}

.status {
    display: flex;
    margin-left: 12px;
}

.dot,
.approx {
    width: 15px;
    height: 14px;
    border-radius: 7px 0 0 7px;
    background: #c3dcd3;
}

.dot::before {
    content: "";
    display: block;
    width: 7px;
    height: 7px;
    margin: 4px 5px;
    border-radius: 50%;
    background: #16a67b;
}

.approx {
    border-radius: 0 7px 7px 0;
    background: #efbfd2;
    color: #b3144e;
    line-height: 13px;
    text-align: center;
}

.ohlc {
    margin-left: 7px;
    font-size: 10px;
}

.legend-toggle {
    height: 12px;
    margin-left: 5px;
    font-size: 10px;
}

.note {
    position: absolute;
    color: #1c1c1c;
    font-family: "Noto Sans", sans-serif;
    font-size: 14px;
    line-height: 15px;
    white-space: pre;
}

.note-fomo {
    top: 60px;
    left: 72px;
}

.note-control {
    top: 185px;
    left: 65px;
}

.note-edit {
    top: 223px;
    left: 55px;
    width: 534px;
    height: 82px;
    margin: 0;
    padding: 1px 2px;
    border: 1px solid #3549cf;
    background: none;
    resize: none;
    overflow: hidden;
    outline: none;
}

.caret {
    position: absolute;
    top: 286px;
    left: 583px;
    width: 1px;
    height: 15px;
    background: #111;
}

.note-title {
    top: 143px;
    left: 854px;
    width: 120px;
    padding: 7px 12px;
    border: 1px solid #8f8998;
    background: #b9adcb;
}

.note-goals {
    top: 181px;
    left: 867px;
}

.price-tag {
    position: absolute;
    top: 268px;
    right: 1px;
    padding: 0 2px;
    background: #000;
    color: #fff;
    font-size: 10px;
    line-height: 14px;
}

.nav-buttons {
    position: absolute;
    bottom: 27px;
    left: 0;
    right: 0;
    display: flex;
    justify-content: center;
    gap: 7px;
    padding-left: 26px;
}

.nav-buttons button,
.latest {
    width: 20px;
    height: 20px;
    border-radius: 3px;
    background: #2a2a2a;
    color: #eee;
    box-shadow: 0 1px 3px rgba(0, 0, 0, 0.4);
}

.nav-buttons .gap {
    margin-left: 6px;
}

.latest {
    position: absolute;
    right: 18px;
    bottom: 27px;
}

.brand {
    position: absolute;
    left: 10px;
    bottom: 6px;
    display: flex;
    align-items: center;
    gap: 6px;
    color: #0c0c0c;
    font-family: Inter, sans-serif;
    font-size: 17px;
    font-weight: 600;
    line-height: 24px;
    text-decoration: none;
    text-shadow: 0 0 2px #fff, 0 0 2px #fff, 0 0 2px #fff;
}

.brand-mark {
    width: 24px;
    height: 14px;
    filter: drop-shadow(0 0 1px #fff) drop-shadow(0 0 1px #fff);
}

.ticks {
    display: flex;
    flex-direction: column;
    height: 70%;
    padding-right: 8px;
    list-style: none;
    font-size: 10px;
    text-align: right;
}

.ticks li {
    flex: 1;
    line-height: 23px;
}

.label {
    display: block;
    width: 55px;
    padding-left: 6px;
    background: #000;
    color: #fff;
    font-size: 10px;
    line-height: 14px;
}

.label small {
    color: #c4c4c4;
    font-size: 10px;
}

.blue {
    background: var(--blue);
}

.gray {
    background: #444;
}

.teal {
    background: var(--teal);
}

.scale > .label,
.label-stack {
    position: absolute;
    left: 0;
}

.l-cross {
    top: 216px;
}

.scale > .l-last {
    top: 268px;
    padding-bottom: 1px;
    line-height: 12px;
}

.l-4110 {
    top: 307px;
}

.l-4054 {
    top: 366px;
}

.l-4000 {
    top: 422px;
}

.l-3979 {
    top: 444px;
}

.scale-modes {
    position: absolute;
    bottom: 4px;
    left: 9px;
    display: flex;
    font-size: 10px;
}

.scale-modes button {
    width: 20px;
    height: 18px;
}

.time-axis {
    position: relative;
    display: flex;
    align-items: center;
    overflow: hidden;
    padding-left: 87px;
    font-size: 10px;
    text-align: center;
}

.time-axis span {
    flex: none;
    width: 54px;
}

.time-axis .wide {
    width: 64px;
}

.time-axis b {
    flex: none;
    width: 44px;
    font-weight: 600;
}

.cross-time {
    position: absolute;
    left: 1px;
    top: 0;
    width: 113px;
    height: 20px;
    background: var(--blue);
    color: #fff;
    font-size: 10px;
    line-height: 22px;
}

.axis-settings .icon {
    width: 14px;
    height: 14px;
}

.ranges,
.panels {
    flex: none;
    display: flex;
    align-items: center;
    height: 32px;
    padding: 0 9px 0 11px;
    background: var(--ink);
    font-weight: 600;
}

.ranges {
    gap: 9px;
    padding-top: 2px;
}

.goto {
    height: 18px;
    padding-left: 9px;
    border-left: 1px solid #3a3a3a;
}

.clock {
    margin-left: auto;
}

.panels {
    gap: 27px;
    margin-top: 4px;
    padding: 0 6px 0 12px;
}

.panel-actions {
    display: flex;
    gap: 10px;
    margin-left: auto;
}

/* watchlist */
.watchlist {
    position: relative;
    flex: none;
    display: flex;
    flex-direction: column;
    width: 204px;
    background: var(--ink);
}

.watch-head {
    display: flex;
    align-items: center;
    gap: 12px;
    height: 39px;
    padding: 0 13px 0 12px;
}

.list-name {
    gap: 2px;
    margin-right: auto;
    font-weight: bold;
    white-space: nowrap;
}

.list-name .icon {
    margin-right: -6px;
}

.watch-scroll {
    flex: 1;
    min-height: 0;
    overflow: hidden;
}

.watchlist table {
    width: 202px;
    table-layout: fixed;
    border-collapse: separate;
    border-spacing: 0;
}

.col-flag {
    width: 12px;
}

.col-logo {
    width: 21px;
}

.col-pct {
    width: 70px;
}

.watchlist td,
.watchlist th {
    height: 25px;
    padding: 0;
    border-bottom: 1px solid #2b2b2b;
}

.watchlist th {
    color: #8c8c8c;
    font-weight: normal;
    text-align: left;
}

.watchlist .pct {
    padding-right: 12px;
    text-align: right;
}

.watchlist .mute .flag {
    color: #555;
}

.watchlist .group td {
    height: 35px;
    padding-top: 10px;
    color: #8c8c8c;
    font-size: 10px;
}

.group .icon {
    display: block;
    margin-left: -2px;
}

.watchlist .selected td {
    border-top: 1px solid #c4c4c4;
    border-bottom-color: #c4c4c4;
}

.watchlist .selected td:last-child {
    padding-right: 11px;
    border-right: 1px solid #c4c4c4;
    border-radius: 0 4px 4px 0;
}

.watchlist .selected td:first-child {
    border-left: 1px solid #c4c4c4;
    border-radius: 4px 0 0 4px;
}

i.coin {
    border-radius: 50%;
    color: #fff;
    font-size: 7px;
    font-weight: bold;
    line-height: 16px;
    text-align: center;
}

.us500 {
    background: #c0123c;
}

.us30 {
    background: #21a9cb;
}

.us100 {
    background: #1c9cae;
}

.uk100 {
    background: #5a1c3c;
}

i.dxy {
    background: #14885c;
    font-size: 12px;
}

.watch-foot {
    display: flex;
    align-items: center;
    gap: 12px;
    height: 43px;
    padding: 0 13px;
    border-top: 4px solid var(--gutter);
}

.watch-foot b {
    margin-right: auto;
    margin-left: -6px;
}

.collapse {
    position: absolute;
    left: -4px;
    bottom: 48px;
    width: 8px;
    height: 22px;
    border-radius: 4px;
    background: #1a1a1a;
}

/* right rail */
.rail {
    flex: none;
    display: flex;
    flex-direction: column;
    align-items: center;
    width: 37px;
    padding: 1px 3px 1px 0;
    border-left: 1px solid var(--gutter);
    background: var(--ink);
}

.rail button {
    position: relative;
    flex: none;
    width: 32px;
    height: 38px;
}

.rail .on {
    height: 32px;
    margin: 3px 0;
    border-radius: 5px;
    background: #3d3d3d;
}

.rail .badge {
    top: 2px;
    right: 0;
    width: 22px;
}

.rail .push {
    margin-top: auto;
}

.rail .apps {
    width: 28px;
    height: 28px;
    margin: 5px 0;
    border-radius: 50%;
    background: #f4f4f4;
    color: #111;
}

.rail hr {
    width: 28px;
    height: 1px;
    margin: 5px 0;
    border: 0;
    background: #3d3d3d;
}

/* windows taskbar */
.taskbar {
    position: relative;
    flex: none;
    display: flex;
    align-items: center;
    justify-content: center;
    height: 40px;
    padding-bottom: 1px;
    border-top: 1px solid #3c4a4c;
    background: linear-gradient(to right, #1a2a30, #1c2036 18%, #172b33 30%, #172b2f 60%, #1a2d2b 75%, #182b33 86%, #1d3418 100%);
}

.apps-row {
    display: grid;
    grid-template-columns: repeat(24, 1fr);
    width: 50%;
    height: 100%;
}

.apps-row button {
    position: relative;
}

.apps-row svg,
.tray svg {
    width: 16px;
    height: 16px;
}

.running::after,
.current::after {
    content: "";
    position: absolute;
    bottom: 3px;
    width: 4px;
    height: 2px;
    border-radius: 2px;
    background: #98a3a6;
}

.current {
    background: #2a3d42;
    border-radius: 4px;
}

.current::after {
    width: 8px;
    background: #4fb8e8;
}

.notify::before {
    content: "";
    position: absolute;
    top: 9px;
    right: 4px;
    width: 4px;
    height: 4px;
    border-radius: 50%;
    background: #5aa5d0;
}

.tile {
    display: flex;
    align-items: center;
    justify-content: center;
    width: 14px;
    height: 14px;
    border-radius: 2px;
    color: #fff;
    font-size: 7px;
    font-weight: bold;
}

.black {
    background: #080808;
}

.apps-row .mini-tv {
    width: 11px;
    height: 7px;
}

.round {
    border-radius: 50%;
}

.zoom {
    background: #1f5fe0;
}

.canva {
    background: linear-gradient(135deg, #14b8c8, #3a58d8 60%, #7a2be0);
    font-size: 10px;
}

.notion {
    width: 11px;
    height: 12px;
    border: 1px solid #ddd;
    background: #222;
    font-family: "Liberation Serif", serif;
    font-size: 9px;
}

.weather {
    position: absolute;
    left: 16px;
    top: 4px;
}

.weather svg {
    width: 24px;
    height: 24px;
}

.weather .badge {
    top: 0;
    right: 0;
    width: 14px;
    background: #dd7f9c;
    color: #4a1020;
}

.tray {
    position: absolute;
    right: 15px;
    display: flex;
    align-items: center;
    gap: 11px;
    color: #f0f0f0;
    font-size: 10px;
    line-height: 13px;
    text-align: right;
}

.tray .tight {
    margin-left: -6px;
}
```
